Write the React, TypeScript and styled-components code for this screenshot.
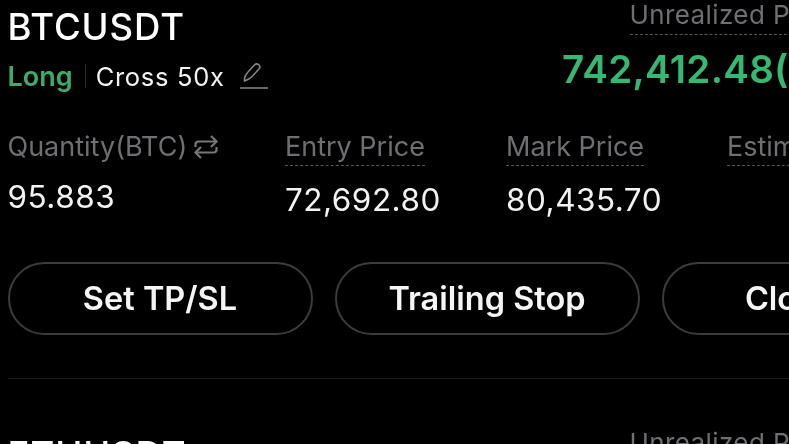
import styled, { createGlobalStyle } from "styled-components";

const GlobalStyle = createGlobalStyle`
  html, body {
    margin: 0;
    height: 100%;
    background: #000;
    overflow: hidden;
  }
  body {
    font-family: Inter, "Liberation Sans", sans-serif;
  }
`;

const Page = styled.div`
  width: 789px;
  height: 444px;
  overflow: hidden;
  background: #000;
  filter: blur(0.35px);
`;

const Position = styled.section`
  width: 1100px;
  padding: 0 0 0 7.5px;
  box-sizing: border-box;
`;

const Header = styled.div`
  display: flex;
  height: 128px;
`;

const TitleBlock = styled.div`
  width: 554.5px;
  flex: none;
`;

const Symbol = styled.div`
  color: #fff;
  font-size: 36.5px;
  line-height: 44px;
  font-weight: 500;
  height: 44px;
  padding-top: 5px;
  margin-bottom: 1px;
  letter-spacing: 0.9px;
`;

const TagRow = styled.div`
  display: flex;
  align-items: center;
  height: 36px;
  margin-top: 9px;
`;

const Side = styled.span`
  color: #3dab6c;
  font-size: 27px;
  font-weight: 600;
`;

const Divider = styled.i`
  width: 1px;
  height: 24px;
  background: #2a2a2a;
  margin: 0 10px 0 12px;
`;

const Margin = styled.span`
  color: #f2f2f2;
  font-size: 25.5px;
  letter-spacing: 0.7px;
`;

const EditIcon = styled.svg`
  width: 30px;
  height: 30px;
  margin: -2px 0 0 14px;
  color: #8a8a8a;
`;

const PnlBlock = styled.div`
  white-space: nowrap;
`;

const PnlLabel = styled.div`
  display: inline-block;
  margin: 0 0 0 67.5px;
  padding-bottom: 4px;
  color: #6f6f73;
  font-size: 26px;
  line-height: 30px;
  border-bottom: 1px dashed #55555a;
  letter-spacing: 0.4px;
`;

const PnlValue = styled.div`
  color: #35b871;
  font-size: 38.5px;
  line-height: 46px;
  font-weight: 600;
  margin-top: 11px;
  letter-spacing: 0.3px;
`;

const Stats = styled.div`
  display: flex;
  height: 134px;
`;

const Stat = styled.div<{ $width: number }>`
  width: ${(p) => p.$width}px;
  flex: none;
`;

const StatLabel = styled.div`
  display: inline-flex;
  align-items: center;
  color: #6f6f73;
  font-size: 27px;
  line-height: 37px;
  white-space: nowrap;
`;

const DottedLabel = styled(StatLabel)`
  border-bottom: 1px dashed #55555a;
`;

const SwapIcon = styled.svg`
  width: 26px;
  height: 26px;
  margin-left: 6px;
  color: #77777b;
`;

const StatValue = styled.div<{ $offset: number }>`
  color: #f2f2f2;
  font-size: 31.5px;
  line-height: 36px;
  margin-top: ${(p) => p.$offset}px;
  letter-spacing: 0.5px;
`;

const Actions = styled.div`
  display: flex;
  gap: 22px;
`;

const ActionButton = styled.button`
  width: 305px;
  height: 73px;
  flex: none;
  box-sizing: border-box;
  background: transparent;
  color: #f5f5f5;
  border: 2px solid #3c3c3c;
  border-radius: 37px;
  font-family: inherit;
  font-size: 32.5px;
  font-weight: 600;
  padding: 0;
`;

const Rule = styled.hr`
  border: 0;
  height: 1px;
  background: #1f1f1f;
  margin: 43px 0 0;
`;

const NextHeader = styled(Header)`
  margin-top: 49px;
`;

export default function App() {
  return (
    <Page>
      <GlobalStyle />
      <Position>
        <Header>
          <TitleBlock>
            <Symbol>BTCUSDT</Symbol>
            <TagRow>
              <Side>Long</Side>
              <Divider />
              <Margin>Cross 50x</Margin>
              <EditIcon viewBox="0 0 30 30" fill="none" stroke="currentColor" strokeWidth="1.5">
                <path d="M5.500 21c-.3-3.500 1-6.500 3.500-9l6.500-7c1.200-1.200 3-1.300 4.300-.2 1.200 1.200 1.300 3 .1 4.300l-6.300 7c-2.400 2.500-5 4-8.100 4.900Z" />
                <path d="M1 28h28" />
              </EditIcon>
            </TagRow>
          </TitleBlock>
          <PnlBlock>
            <PnlLabel>Unrealized PnL (USDT)</PnlLabel>
            <PnlValue>742,412.48(49.91%)</PnlValue>
          </PnlBlock>
        </Header>
        <Stats>
          <Stat $width={277.5}>
            <StatLabel>
              Quantity(BTC)
              <SwapIcon viewBox="0 0 26 26" fill="none" stroke="currentColor" strokeWidth="2.2">
                <path d="M2.500 13V10.500c0-1.700 1.300-3 3-3H23" />
                <path d="M18 2l5.500 5.500L18 13" />
                <path d="M23.500 13v2.500c0 1.700-1.300 3-3 3H3" />
                <path d="M8 13l-5.500 5.500L8 24" />
              </SwapIcon>
            </StatLabel>
            <StatValue $offset={14}>95.883</StatValue>
          </Stat>
          <Stat $width={221}>
            <DottedLabel>Entry Price</DottedLabel>
            <StatValue $offset={16}>72,692.80</StatValue>
          </Stat>
          <Stat $width={221}>
            <DottedLabel>Mark Price</DottedLabel>
            <StatValue $offset={16}>80,435.70</StatValue>
          </Stat>
          <Stat $width={300}>
            <DottedLabel>Estimated Liq. Price</DottedLabel>
          </Stat>
        </Stats>
        <Actions>
          <ActionButton>Set TP/SL</ActionButton>
          <ActionButton>Trailing Stop</ActionButton>
          <ActionButton>Close All</ActionButton>
        </Actions>
        <Rule />
        <NextHeader>
          <TitleBlock>
            <Symbol>ETHUSDT</Symbol>
          </TitleBlock>
          <PnlBlock>
            <PnlLabel>Unrealized PnL (USDT)</PnlLabel>
          </PnlBlock>
        </NextHeader>
      </Position>
    </Page>
  );
}
